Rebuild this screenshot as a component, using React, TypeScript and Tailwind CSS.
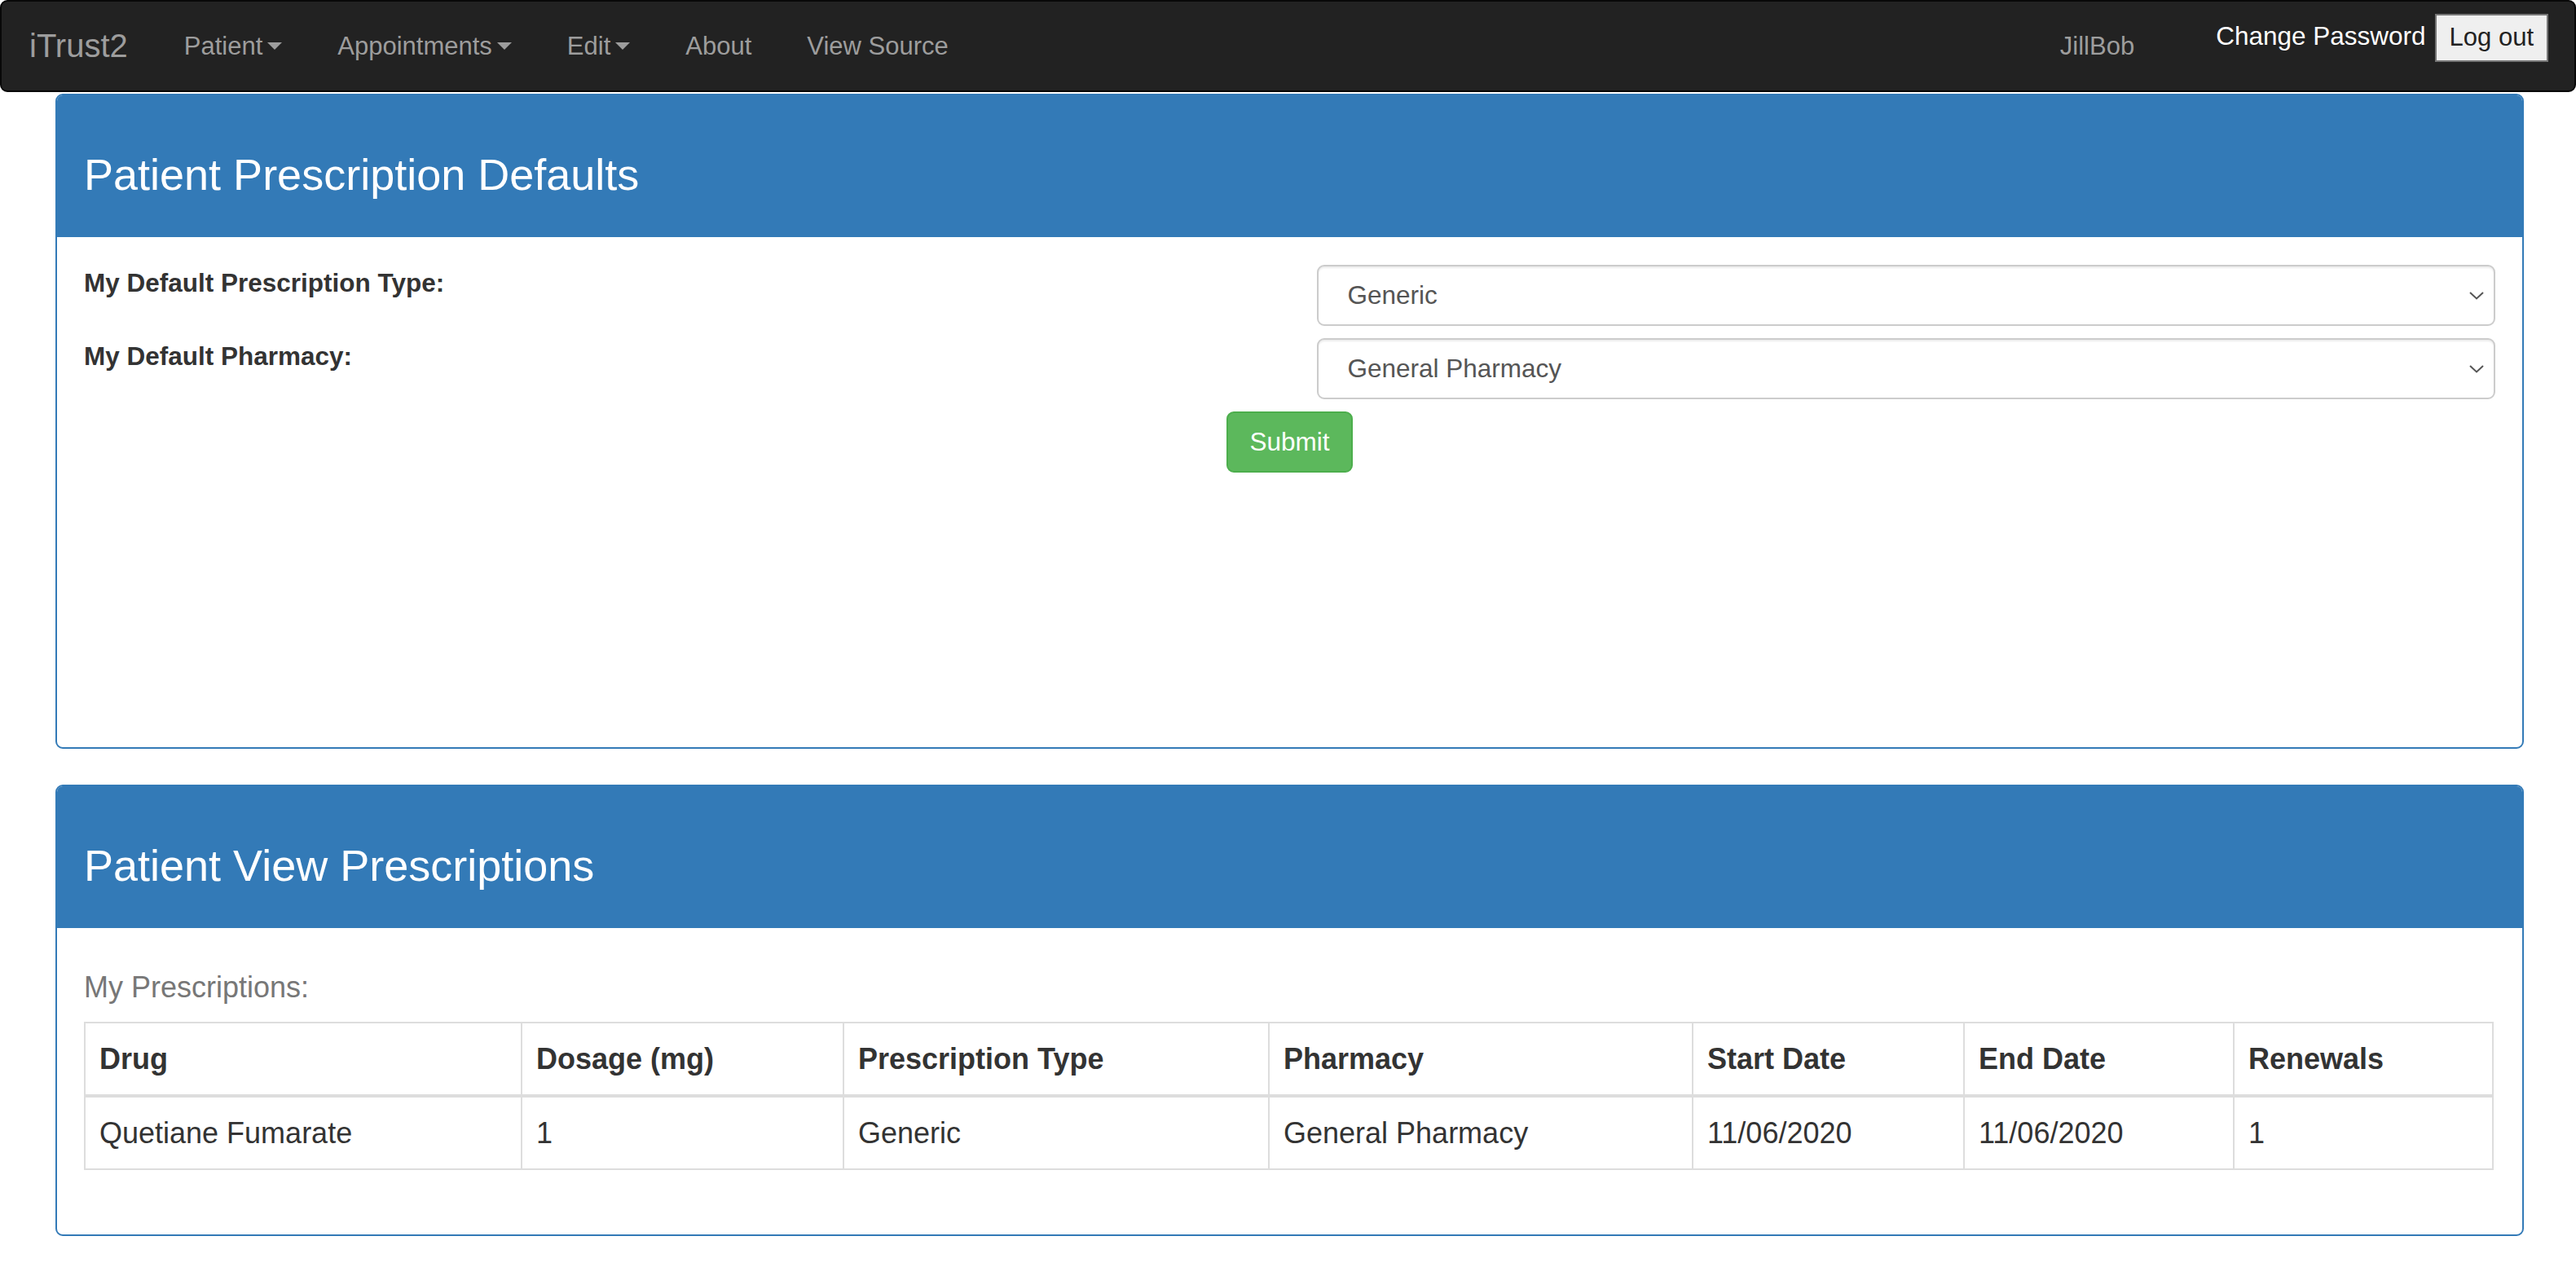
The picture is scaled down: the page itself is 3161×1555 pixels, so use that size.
import React from 'react';

const font = { fontFamily: '"Liberation Sans", Arial, Helvetica, sans-serif' };

function Caret() {
  return (
    <span className="inline-block w-0 h-0 ml-[6px] border-t-[9px] border-x-[9px] border-t-[#9d9d9d] border-x-transparent align-middle" />
  );
}

function NavLink({ label, caret }: { label: string; caret?: boolean }) {
  return (
    <a className="px-[34px] text-[31px] leading-[44px] text-[#9d9d9d] whitespace-nowrap flex items-center">
      {label}
      {caret && <Caret />}
    </a>
  );
}

function Chevron() {
  return (
    <svg className="absolute right-[14px] top-1/2 -translate-y-1/2 pointer-events-none" width="18" height="10" viewBox="0 0 18 10" fill="none">
      <path d="M1 1 L9 8.5 L17 1" stroke="#555" strokeWidth="2" />
    </svg>
  );
}

function Select({ value }: { value: string }) {
  return (
    <div className="relative">
      <select
        defaultValue={value}
        className="appearance-none w-full h-[75px] pl-[36px] pr-[50px] text-[31.5px] text-[#555] bg-white border-2 border-[#ccc] rounded-[9px] shadow-[inset_0_2px_2px_rgba(0,0,0,0.075)] outline-none"
        style={font}
      >
        <option>{value}</option>
      </select>
      <Chevron />
    </div>
  );
}

function Panel({ title, children, bodyClass }: { title: string; children: React.ReactNode; bodyClass: string }) {
  return (
    <div className="ml-[68px] w-[3029px] border-2 border-[#337ab7] rounded-[9px] overflow-hidden bg-white">
      <div className="bg-[#337ab7] px-[33px] pt-[68px] pb-[48px]">
        <h3 className="text-[54px] leading-[58px] text-white">{title}</h3>
      </div>
      <div className={bodyClass}>{children}</div>
    </div>
  );
}

const columns = [
  { label: 'Drug', w: 'w-[536px]', v: 'Quetiane Fumarate' },
  { label: 'Dosage (mg)', w: 'w-[395px]', v: '1' },
  { label: 'Prescription Type', w: 'w-[522px]', v: 'Generic' },
  { label: 'Pharmacy', w: 'w-[520px]', v: 'General Pharmacy' },
  { label: 'Start Date', w: 'w-[333px]', v: '11/06/2020' },
  { label: 'End Date', w: 'w-[331px]', v: '11/06/2020' },
  { label: 'Renewals', w: 'w-[318px]', v: '1' },
];

export default function App() {
  return (
    <div className="w-[3161px] min-h-[1555px] bg-white text-[#333]" style={font}>
      {/* Navbar */}
      <nav className="h-[113px] bg-[#222] border-2 border-[#080808] rounded-[9px] flex items-center">
        <a className="pl-[34px] pr-[35px] text-[40px] leading-[44px] text-[#9d9d9d] -mt-[1px]">iTrust2</a>
        <NavLink label="Patient" caret />
        <NavLink label="Appointments" caret />
        <NavLink label="Edit" caret />
        <NavLink label="About" />
        <NavLink label="View Source" />
        <div className="ml-auto flex h-full">
          <span className="self-center text-[31px] leading-[44px] text-[#9d9d9d] mr-[100px]">JillBob</span>
          <div className="self-start mt-[15px] flex items-center mr-[32px]">
            <span className="text-[31.5px] text-white mr-[11px] -mt-[4px]">Change Password</span>
            <button
              className="h-[59px] px-[16px] bg-[#efefef] border-2 border-[#767676] text-[31px] text-[#222]"
              style={font}
            >
              Log out
            </button>
          </div>
        </div>
      </nav>

      <div className="mt-[2px]">
        <Panel title="Patient Prescription Defaults" bodyClass="h-[626px] pt-[34px] px-[33px]">
          <div className="-mx-[33px] flex flex-col gap-[15px]">
            <div className="flex items-start">
              <label className="w-1/2 px-[33px] text-[31.5px] leading-[44px] font-bold">My Default Prescription Type:</label>
              <div className="w-1/2 px-[33px]">
                <Select value="Generic" />
              </div>
            </div>
            <div className="flex items-start">
              <label className="w-1/2 px-[33px] text-[31.5px] leading-[44px] font-bold">My Default Pharmacy:</label>
              <div className="w-1/2 px-[33px]">
                <Select value="General Pharmacy" />
              </div>
            </div>
            <div className="flex justify-center">
              <button
                className="h-[75px] px-[26px] bg-[#5cb85c] border-2 border-[#4cae4c] rounded-[9px] text-[31.5px] text-white"
                style={font}
              >
                Submit
              </button>
            </div>
          </div>
        </Panel>

        <div className="h-[44px]" />

        <Panel title="Patient View Prescriptions" bodyClass="pt-[47px] pb-[79px] px-[33px]">
          <p className="text-[36px] leading-[51px] text-[#777] mb-[17px]">My Prescriptions:</p>
          <table className="w-[2955px] table-fixed border-collapse text-[36px]">
            <thead>
              <tr>
                {columns.map((c) => (
                  <th
                    key={c.label}
                    className={`${c.w} text-left font-bold leading-[51px] py-[18px] px-[17px] border-2 border-[#ddd] border-b-[4px]`}
                  >
                    {c.label}
                  </th>
                ))}
              </tr>
            </thead>
            <tbody>
              <tr>
                {columns.map((c) => (
                  <td key={c.label} className="leading-[51px] py-[18px] px-[17px] border-2 border-[#ddd]">
                    {c.v}
                  </td>
                ))}
              </tr>
            </tbody>
          </table>
        </Panel>
      </div>
    </div>
  );
}
